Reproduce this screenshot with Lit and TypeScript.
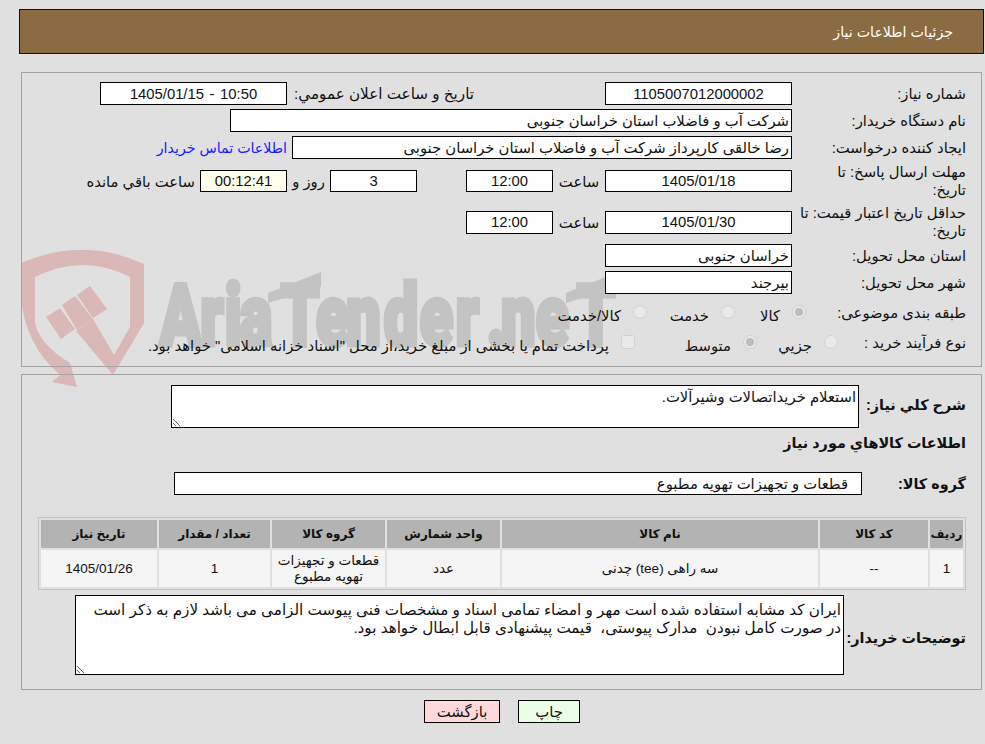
import { LitElement, html, css } from "lit";
import { customElement } from "lit/decorators.js";

const columns = [
  { title: "ردیف", width: 33 },
  { title: "کد کالا", width: 108 },
  { title: "نام کالا", width: 316 },
  { title: "واحد شمارش", width: 113 },
  { title: "گروه کالا", width: 113 },
  { title: "تعداد / مقدار", width: 111 },
  { title: "تاریخ نیاز", width: 116 },
];
const rowCells = ["1", "--", "سه راهی (tee) چدنی", "عدد", "قطعات و تجهیزات تهویه مطبوع", "1", "1405/01/26"];
const noteText =
  "ایران کد مشابه استفاده شده است مهر و امضاء تمامی اسناد و مشخصات فنی پیوست الزامی می باشد لازم به ذکر است\nدر صورت کامل نبودن  مدارک پیوستی،  قیمت پیشنهادی قابل ابطال خواهد بود.";

@customElement("app-root")
export class AppRoot extends LitElement {
  static styles = css`
    :host {
      display: block;
      position: relative;
      width: 985px;
      height: 744px;
      overflow: hidden;
      background: #e0e0e0;
      color: #111;
      font-family: "Liberation Sans", "DejaVu Sans", sans-serif;
      font-size: 14.8px;
      direction: rtl;
    }
    .wm { position: absolute; left: 0; top: 0; width: 985px; height: 744px; }
    .wm-shield { fill: #dab8b8; }
    .wm-word { fill: #c3c3c3; stroke: #c3c3c3; stroke-width: 5px; font-family: Roboto, sans-serif; font-weight: 900; font-size: 85px; direction: ltr; }
    .wm-bar { fill: #c3c3c3; }
    .page { position: relative; display: flow-root; }
    .head {
      box-sizing: border-box;
      height: 45px;
      margin: 9px 1px 0 19px;
      padding: 0 30px 0 0;
      background: #8b6c42;
      border: 1px solid #111;
      color: #fff;
      display: flex;
      align-items: center;
      font-size: 14.2px;
    }
    .sec { box-sizing: border-box; margin: 0 3px 0 21px; border: 1px solid #a3a3a3; padding-right: 15px; }
    .s1 { height: 295px; margin-top: 18px; padding-top: 9px; }
    .s2 { height: 316px; margin-top: 7px; padding-top: 10px; }
    .row { display: flex; align-items: center; }
    .h23 { height: 23px; }
    .tall { height: 34px; }
    .m4 { margin-top: 4px; }
    .m5 { margin-top: 5px; }
    .m7 { margin-top: 7px; }
    .m8 { margin-top: 8px; }
    .lbl { box-sizing: border-box; width: 174px; flex: none; padding-left: 4px; line-height: 18px; }
    .f {
      box-sizing: border-box;
      height: 23px;
      flex: none;
      background: #fff;
      border: 1px solid #000;
      display: flex;
      align-items: center;
      justify-content: center;
      white-space: nowrap;
      overflow: hidden;
    }
    .f.h22 { height: 22px; }
    .f.start { justify-content: flex-start; padding: 0 2px; }
    .f.grp { width: 688px; padding: 0 13px; }
    .w187 { width: 187px; }
    .w87 { width: 87px; }
    .w562 { width: 562px; }
    .w500 { width: 500px; }
    .wide { word-spacing: 1.5px; }
    .f.cream { background: #ffffee; }
    .pub { width: 318px; box-sizing: border-box; padding-right: 131px; flex: none; white-space: nowrap; font-size: 15.2px; }
    .link { color: #1a1aff; margin-right: 5px; white-space: nowrap; font-size: 14.2px; }
    .hour { width: 52px; flex: none; text-align: center; }
    .sp49 { width: 49px; flex: none; }
    .day { width: 43px; flex: none; text-align: center; }
    .left { margin-right: 5px; white-space: nowrap; }
    .opts { height: 22px; }
    .l-a { width: 160px; flex: none; }
    .l-b { width: 128px; flex: none; }
    .opt { display: flex; align-items: center; gap: 12px; flex: none; white-space: nowrap; }
    .i71 { width: 71px; }
    .i88 { width: 88px; }
    .i81 { width: 81px; }
    .i122 { width: 122px; }
    .opt span { padding-top: 6px; }
    .rad, .chk { box-sizing: border-box; width: 14px; height: 14px; flex: none; background: #e9e9e9; border: 1px solid #d2d2d2; display: flex; align-items: center; justify-content: center; }
    .rad { border-radius: 50%; }
    .chk { border-radius: 3px; }
    .rad.on::after { content: ""; width: 8px; height: 8px; border-radius: 50%; background: #bdbdbd; }
    .b { font-weight: 700; font-size: 14.4px; }
    .dsc { align-items: flex-start; height: 43px; }
    .dsc .b { width: 107px; flex: none; padding-top: 12px; box-sizing: border-box; }
    textarea {
      box-sizing: border-box;
      display: block;
      margin: 0;
      background: #fff;
      border: 1px solid #000;
      border-radius: 0;
      font: inherit;
      color: inherit;
      direction: rtl;
      padding: 2px;
      outline: none;
    }
    .ta1 { width: 688px; height: 43px; }
    .ta2 { width: 769px; height: 80px; line-height: 18px; padding-top: 5px; font-size: 15.2px; }
    .group { height: 23px; margin-top: 19px; }
    .group .b { width: 104px; flex: none; }
    .goods { height: 20px; margin-top: 5px; align-items: center; }
    table {
      table-layout: fixed;
      width: 928px;
      margin: 22px 0 0 0;
      border-collapse: separate;
      border-spacing: 2px;
      border: 1px solid #c4c4c4;
    }
    th { background: #b3b3b3; height: 28px; padding: 0; font-size: 12px; font-weight: 700; }
    td { background: #f5f5f5; height: 37px; padding: 0 3px; text-align: center; line-height: 16px; font-size: 13.5px; }
    .notes { margin-top: 5px; height: 80px; }
    .notes .b { width: 122px; flex: none; padding-top: 6px; }
    .acts { display: flex; flex-direction: row-reverse; justify-content: center; gap: 18px; margin-top: 10px; padding-left: 19px; }
    .btn { box-sizing: border-box; height: 23px; border: 1px solid #000; display: flex; align-items: center; justify-content: center; }
    .print { width: 62px; background: #eaffe6; }
    .back { width: 76px; background: #ffd9d9; }
  `;

  render() {
    return html`
      <svg class="wm" viewBox="0 0 985 744" aria-hidden="true">
        <path class="wm-shield" d="M21 263 Q83 236 144 264 L144 323 L113 375 L76 331 L93 319 L114 355 L130 327 L130 277 Q83 253 35 277 L35 323 Q40 345 70 363 L77 387 L52 382 L60 375 Q25 345 21 297 Z"/>
        <polygon class="wm-shield" points="46,317 60,308 75,329 61,339"/>
        <polygon class="wm-shield" points="62,305 75,296 93,319 77,330"/>
        <polygon class="wm-shield" points="77,295 90,286 107,309 93,318"/>
        <polygon class="wm-bar" points="268,293 321,272 321,287 268,303"/>
        <polygon class="wm-bar" points="566,293 618,272 618,287 566,303"/>
        <text class="wm-word" transform="scale(0.72 1)" y="345" x="222 278 312 333 390 439 481 533 583 633 676 696 744 801">AriaTender.neT</text>
      </svg>
      <div class="page">
        <div class="head">جزئیات اطلاعات نیاز</div>
        <section class="sec s1">
          <div class="row h23">
            <div class="lbl">شماره نیاز:</div>
            <div class="f w187">1105007012000002</div>
            <div class="pub">تاريخ و ساعت اعلان عمومي:</div>
            <div class="f w187 wide">10:50 - 1405/01/15</div>
          </div>
          <div class="row h23 m4">
            <div class="lbl">نام دستگاه خریدار:</div>
            <div class="f w562 start">شرکت آب و فاضلاب استان خراسان جنوبی</div>
          </div>
          <div class="row h23 m4">
            <div class="lbl">ایجاد کننده درخواست:</div>
            <div class="f w500 start">رضا خالقی کارپرداز شرکت آب و فاضلاب استان خراسان جنوبی</div>
            <div class="link">اطلاعات تماس خریدار</div>
          </div>
          <div class="row tall m5">
            <div class="lbl">مهلت ارسال پاسخ: تا<br />تاریخ:</div>
            <div class="f w187 h22">1405/01/18</div>
            <div class="hour">ساعت</div>
            <div class="f w87 h22">12:00</div>
            <div class="sp49"></div>
            <div class="f w87 h22">3</div>
            <div class="day">روز و</div>
            <div class="f w87 h22 cream">00:12:41</div>
            <div class="left">ساعت باقي مانده</div>
          </div>
          <div class="row tall m7">
            <div class="lbl">حداقل تاریخ اعتبار قیمت: تا<br />تاریخ:</div>
            <div class="f w187">1405/01/30</div>
            <div class="hour">ساعت</div>
            <div class="f w87">12:00</div>
          </div>
          <div class="row h23 m5">
            <div class="lbl">استان محل تحویل:</div>
            <div class="f w187 start">خراسان جنوبی</div>
          </div>
          <div class="row h23 m4">
            <div class="lbl">شهر محل تحویل:</div>
            <div class="f w187 start">بیرجند</div>
          </div>
          <div class="row opts m7">
            <div class="l-a">طبقه بندی موضوعی:</div>
            <div class="opt i71"><i class="rad on"></i><span>کالا</span></div>
            <div class="opt i88"><i class="rad"></i><span>خدمت</span></div>
            <div class="opt"><i class="rad"></i><span>کالا/خدمت</span></div>
          </div>
          <div class="row opts m8">
            <div class="l-b">نوع فرآیند خرید :</div>
            <div class="opt i81"><i class="rad"></i><span>جزيي</span></div>
            <div class="opt i122"><i class="rad on"></i><span>متوسط</span></div>
            <div class="opt"><i class="chk"></i><span>پرداخت تمام یا بخشی از مبلغ خرید،از محل "اسناد خزانه اسلامی" خواهد بود.</span></div>
          </div>
        </section>
        <section class="sec s2">
          <div class="row dsc">
            <div class="b">شرح كلي نياز:</div>
            <textarea class="ta1" readonly>استعلام خریداتصالات وشیرآلات.</textarea>
          </div>
          <div class="row goods b">اطلاعات كالاهاي مورد نياز</div>
          <div class="row group">
            <div class="b">گروه کالا:</div>
            <div class="f grp start">قطعات و تجهیزات تهویه مطبوع</div>
          </div>
          <table>
            <colgroup>${columns.map((c) => html`<col style="width:${c.width}px" />`)}</colgroup>
            <thead><tr>${columns.map((c) => html`<th>${c.title}</th>`)}</tr></thead>
            <tbody><tr>${rowCells.map((c) => html`<td>${c}</td>`)}</tr></tbody>
          </table>
          <div class="row notes">
            <div class="b">توضیحات خریدار:</div>
            <textarea class="ta2" readonly .value=${noteText}></textarea>
          </div>
        </section>
        <div class="acts">
          <div class="btn back">بازگشت</div>
          <div class="btn print">چاپ</div>
        </div>
      </div>
    `;
  }
}
